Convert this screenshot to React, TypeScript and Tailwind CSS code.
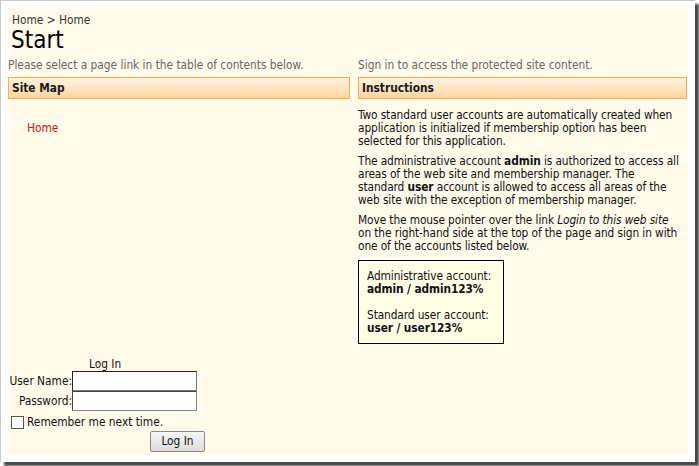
import React from "react";

function HeaderBar({ title }: { title: string }) {
    return (
        <div className="h-[22px] border border-[#f3ad55] bg-gradient-to-b from-[#fff3e0] to-[#ffd59c] px-[3px] flex items-center">
            <span className="font-bold text-[#1a1a1a]">{title}</span>
        </div>
    )
}

function LoginForm() {
    return (
        <div className="flex flex-col w-[200px]">
            <div className="pl-[81px] h-[13px]">Log In</div>
            <div className="flex items-center h-[20px]">
                <label className="w-[64px] text-right">User Name:</label>
                <input className="w-[125px] h-[20px] bg-white border border-[#777] border-t-[#222] border-l-[#222] outline-none" type="text" />
            </div>
            <div className="flex items-center h-[20px]">
                <label className="w-[64px] text-right">Password:</label>
                <input className="w-[125px] h-[20px] bg-white border border-[#888] border-t-[#444] border-l-[#444] outline-none" type="password" />
            </div>
            <div className="flex items-center gap-[3px] pl-[3px] mt-[4px] h-[14px]">
                <span className="w-[13px] h-[13px] border border-[#555] bg-white"></span>
                <span>Remember me next time.</span>
            </div>
            <div className="pl-[142px] mt-[2px]">
                <button className="w-[55px] h-[21px] border border-[#888] rounded-[2px] bg-gradient-to-b from-[#f7f7f7] to-[#dcdcdc] text-[#111]">Log In</button>
            </div>
        </div>
    )
}

export default function App() {
    return (
        <div className="w-[699px] h-[466px] bg-white">
            <div className="w-[695px] h-[462px] bg-white border-l border-t border-[#c9c9c9] shadow-[4px_4px_2px_#4a4a4a] p-[7px] text-[11.8px] leading-[13px] text-[#111]" style={{ fontFamily: '"DejaVu Sans Condensed", "DejaVu Sans", sans-serif' }}>
                <div className="h-full bg-[#fffbea] flex flex-col">
                    <div className="pl-[4px] pt-[6px] text-[#333]">Home &gt; Home</div>
                    <h1 className="pl-[3px] text-[24px] leading-[26px] text-black">Start</h1>
                    <div className="flex gap-[8px] mt-[6px] flex-1">
                        <div className="w-[342px] flex flex-col">
                            <div className="text-[#666] h-[18px]">Please select a page link in the table of contents below.</div>
                            <HeaderBar title="Site Map" />
                            <div className="pl-[19px] pt-[23px]">
                                <a className="text-[#c01818]" href="#">Home</a>
                            </div>
                            <div className="mt-auto pb-[3px]">
                                <LoginForm />
                            </div>
                        </div>
                        <div className="w-[329px] flex flex-col">
                            <div className="text-[#666] h-[18px]">Sign in to access the protected site content.</div>
                            <HeaderBar title="Instructions" />
                            <div className="flex flex-col gap-[7px] pt-[10px] whitespace-nowrap tracking-[-0.1px]">
                                <p>Two standard user accounts are automatically created when<br />application is initialized if membership option has been<br />selected for this application.</p>
                                <p>The administrative account <b>admin</b> is authorized to access all<br />areas of the web site and membership manager. The<br />standard <b>user</b> account is allowed to access all areas of the<br />web site with the exception of membership manager.</p>
                                <p>Move the mouse pointer over the link <i>Login to this web site</i><br />on the right-hand side at the top of the page and sign in with<br />one of the accounts listed below.</p>
                                <div className="w-[146px] border border-black bg-[#ffffe6] px-[8px] pt-[9px] pb-[8px]">
                                    <div>Administrative account:</div>
                                    <div className="font-bold">admin / admin123%</div>
                                    <div className="mt-[13px]">Standard user account:</div>
                                    <div className="font-bold">user / user123%</div>
                                </div>
                            </div>
                        </div>
                    </div>
                </div>
            </div>
        </div>
    )
}
